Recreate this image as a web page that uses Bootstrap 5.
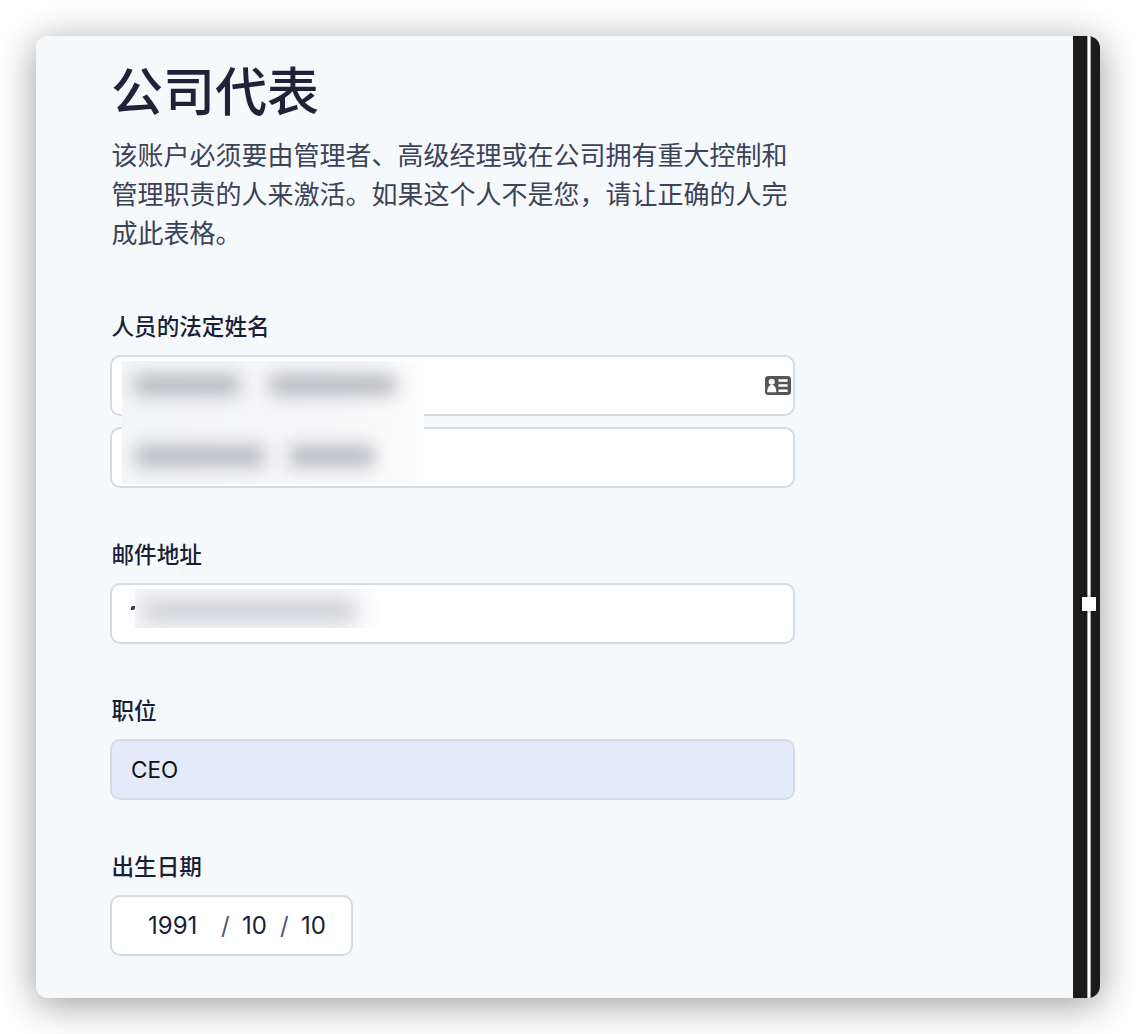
<!doctype html>
<html lang="zh-CN">
<head>
<meta charset="utf-8">
<title>公司代表</title>
<link href="https://cdn.jsdelivr.net/npm/bootstrap@5.3.0/dist/css/bootstrap.min.css" rel="stylesheet">
<style>
html,body{height:100%;overflow:hidden;background:#fff}
body{padding:36px;font-family:Inter,"Noto Sans CJK SC",sans-serif;color:#1a1f36}
.app-window{width:1064px;height:962px;border-radius:12px;overflow:hidden;box-shadow:0 6px 38px rgba(0,0,0,.4);position:relative}
.app-body{width:1037px;background:#f6f9fc;padding:21px 0 0 74px;flex:none}
.app-inner{width:685px}
.page-title{font-size:52px;line-height:72px;font-weight:500;margin:0 0 7px 1px;color:#1f2338}
.page-intro{font-size:26px;line-height:39px;margin:0 0 58px 1.500px;width:682px;color:#3c4257}
.field-label{display:block;font-size:22.600px;line-height:32px;font-weight:500;margin:0 0 12px 1.500px;color:#1a1f36}
.field-input,.field-input:focus{height:61px;border:2px solid #d6dae1;border-radius:10px;font-size:22.500px;padding:0 19px;color:#111;background-color:#fff;box-shadow:none}
.field-autofill,.field-autofill:focus{background-color:#e3ebfb}
.field-block{margin-bottom:51px}
.name-group{gap:11px;margin-bottom:51px}
.card-icon{position:absolute;right:4px;top:21px;width:26px;height:19px}
.blur-patch{position:absolute;background:linear-gradient(90deg,#f4f5f7,#f7f7f9 70%,#fdfdfd);overflow:hidden}
.blur-bar{position:absolute;background:#b4b6bd;filter:blur(9px);height:20px}
.patch-names{left:12px;top:6px;width:302px;height:123px}
.patch-mail{left:25px;top:6px;width:249px;height:39px;background:linear-gradient(90deg,#f3f4f6 80%,#fff)}
.mail-caret{position:absolute;left:21px;top:23px;width:4px;height:4px;background:#333a4d;border-radius:50% 0}
.date-box,.date-box:focus{width:243px;font-size:24px;padding:0 0 0 36px;color:#1a1f36}
.date-year{width:73px}
.date-sep{color:#4f566b;width:21px}
.date-part{width:38px}
.scroll-gutter{width:27px;background:#1b1b1b;flex:none;position:relative}
.scroll-line{position:absolute;left:14px;top:0;bottom:0;width:4px;background:linear-gradient(90deg,#777 0,#fff 35%,#fff 65%,#777 100%)}
.scroll-handle{position:absolute;left:9px;top:561px;width:14px;height:14px;background:#fff;box-shadow:0 0 3px rgba(0,0,0,.4)}
</style>
</head>
<body>
<div class="app-window d-flex">
  <main class="app-body">
    <div class="app-inner">
      <h1 class="page-title">公司代表</h1>
      <p class="page-intro">该账户必须要由管理者、高级经理或在公司拥有重大控制和管理职责的人来激活。如果这个人不是您，请让正确的人完成此表格。</p>

      <label class="field-label">人员的法定姓名</label>
      <div class="name-group d-flex flex-column position-relative">
        <div class="position-relative">
          <input class="form-control field-input" aria-label="姓名">
          <svg class="card-icon" viewBox="0 0 27 20" preserveAspectRatio="none" aria-hidden="true">
            <rect width="27" height="20" rx="3.500" fill="#555"/>
            <circle cx="7" cy="6" r="3.200" fill="#fff"/>
            <path d="M2.300 17.200c0-4.800 1.800-7.600 4.700-7.600s4.800 2.800 4.800 7.600z" fill="#fff"/>
            <path d="M14 3.500h9.500v2.600H14zM14 8.800h9.500v2.600H14zM14 14.200h9.500v2.600H14z" fill="#fff"/>
          </svg>
        </div>
        <input class="form-control field-input" aria-label="姓氏">
        <div class="blur-patch patch-names">
          <span class="blur-bar" style="left:12px;top:14px;width:105px"></span>
          <span class="blur-bar" style="left:148px;top:14px;width:126px"></span>
          <span class="blur-bar" style="left:14px;top:85px;width:128px"></span>
          <span class="blur-bar" style="left:168px;top:85px;width:84px"></span>
        </div>
      </div>

      <label class="field-label">邮件地址</label>
      <div class="field-block position-relative">
        <input class="form-control field-input" aria-label="邮件地址">
        <span class="mail-caret"></span>
        <div class="blur-patch patch-mail">
          <span class="blur-bar" style="left:10px;top:12px;width:210px;background:#cfd0d6"></span>
        </div>
      </div>

      <label class="field-label">职位</label>
      <div class="field-block">
        <input class="form-control field-input field-autofill" value="CEO" aria-label="职位">
      </div>

      <label class="field-label">出生日期</label>
      <div class="form-control field-input date-box d-flex align-items-center">
        <span class="date-year">1991</span>
        <span class="date-sep">/</span>
        <span class="date-part">10</span>
        <span class="date-sep">/</span>
        <span>10</span>
      </div>
    </div>
  </main>
  <div class="scroll-gutter">
    <span class="scroll-line"></span>
    <span class="scroll-handle"></span>
  </div>
</div>
<script src="https://cdn.jsdelivr.net/npm/bootstrap@5.3.0/dist/js/bootstrap.bundle.min.js"></script>
</body>
</html>
